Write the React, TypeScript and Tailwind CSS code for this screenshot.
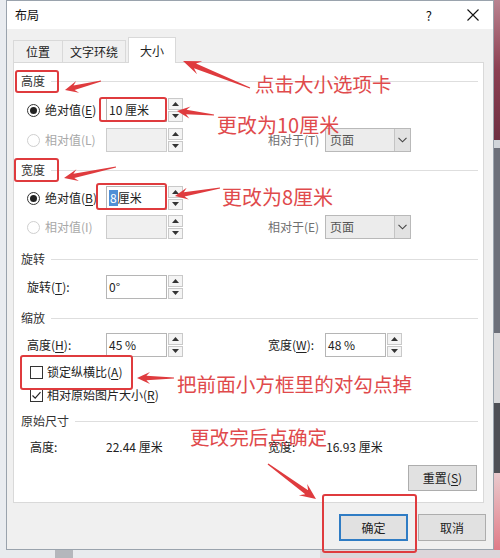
import React from "react";

const RED = "#df3b3e";

function Radio({ checked, disabled }: { checked?: boolean; disabled?: boolean }) {
  return (
    <span
      className={
        disabled
          ? "w-[13px] h-[13px] rounded-full border border-[#cfcfcf] bg-white flex items-center justify-center shrink-0"
          : "w-[13px] h-[13px] rounded-full border border-[#333] bg-white flex items-center justify-center shrink-0"
      }
    >
      {checked && <span className="w-[7px] h-[7px] rounded-full bg-[#222]" />}
    </span>
  );
}

function Check({ checked }: { checked?: boolean }) {
  return (
    <span className="w-[13px] h-[13px] border border-[#333] bg-white flex items-center justify-center shrink-0">
      {checked && (
        <svg width="11" height="11" viewBox="0 0 11 11">
          <path d="M1.5 5.5 L4.2 8.2 L9.5 2.2" fill="none" stroke="#222" strokeWidth="1.2" />
        </svg>
      )}
    </span>
  );
}

function Spinner() {
  return (
    <div className="ml-[1px] w-[15px] h-[24px] flex flex-col gap-[1px]">
      <div className="flex-1 border border-[#c9c9c9] bg-[#f4f4f4] flex items-center justify-center">
        <svg width="7" height="4" viewBox="0 0 7 4">
          <path d="M0 4 L3.5 0 L7 4 Z" fill="#333" />
        </svg>
      </div>
      <div className="flex-1 border border-[#c9c9c9] bg-[#f4f4f4] flex items-center justify-center">
        <svg width="7" height="4" viewBox="0 0 7 4">
          <path d="M0 0 L3.5 4 L7 0 Z" fill="#333" />
        </svg>
      </div>
    </div>
  );
}

function Field({ children, disabled }: { children?: React.ReactNode; disabled?: boolean }) {
  return (
    <div className="flex items-center">
      <div
        className={
          disabled
            ? "w-[61px] h-[24px] border border-[#cccccc] bg-[#f0f0f0]"
            : "w-[61px] h-[24px] border border-[#b5b5b5] bg-white flex items-center pl-[2px] text-[#222]"
        }
      >
        {children}
      </div>
      <Spinner />
    </div>
  );
}

function Select() {
  return (
    <div className="w-[86px] h-[24px] border border-[#b9b9b9] bg-[#ececec] flex items-center">
      <span className="flex-1 pl-[4px] text-[#555]">页面</span>
      <span className="w-[16px] h-full border-l border-[#c4c4c4] bg-[#e2e2e2] flex items-center justify-center">
        <svg width="9" height="6" viewBox="0 0 9 6">
          <path d="M0.5 0.8 L4.5 4.8 L8.5 0.8" fill="none" stroke="#444" strokeWidth="1.1" />
        </svg>
      </span>
    </div>
  );
}

function Header({ text, mt }: { text: string; mt: string }) {
  return (
    <div className={`flex items-center h-[18px] pl-[7px] pr-[5px] ${mt}`}>
      <span className="text-[#333]">{text}</span>
      <div className="flex-1 h-px bg-[#dedede] ml-[6px]" />
    </div>
  );
}

function Key({ k }: { k: string }) {
  return (
    <>
      (<span className="underline underline-offset-2">{k}</span>)
    </>
  );
}

type Pt = [number, number];

function arrow(t: Pt, p: Pt, head = 13, hw = 6, sw = 2.2): string {
  const dx = p[0] - t[0];
  const dy = p[1] - t[1];
  const L = Math.hypot(dx, dy);
  const ux = dx / L;
  const uy = dy / L;
  const nx = -uy;
  const ny = ux;
  const bx = p[0] - ux * head;
  const by = p[1] - uy * head;
  const kx = p[0] - ux * head * 0.72;
  const ky = p[1] - uy * head * 0.72;
  const pts: Pt[] = [
    p,
    [bx + nx * hw, by + ny * hw],
    [kx + nx * sw, ky + ny * sw],
    [t[0] + nx * 0.6, t[1] + ny * 0.6],
    [t[0] - nx * 0.6, t[1] - ny * 0.6],
    [kx - nx * sw, ky - ny * sw],
    [bx - nx * hw, by - ny * hw],
  ];
  return pts.map((q) => `${q[0].toFixed(1)},${q[1].toFixed(1)}`).join(" ");
}

const arrows: { t: Pt; p: Pt; h?: number; w?: number; s?: number }[] = [
  { t: [250, 88], p: [183, 61], h: 18, w: 7, s: 2.6 },
  { t: [101, 81], p: [65, 90] },
  { t: [214, 115], p: [177, 111] },
  { t: [116, 167], p: [64, 178], h: 14 },
  { t: [220, 188], p: [175, 196] },
  { t: [174, 378], p: [137, 378] },
  { t: [268, 464], p: [316, 499], h: 16, w: 7, s: 2.4 },
];

const boxes = [
  "left-[129px] top-[38px] w-[46px] h-[25px]",
  "left-[15px] top-[70px] w-[44px] h-[23px]",
  "left-[99px] top-[97px] w-[68px] h-[25px]",
  "left-[14px] top-[158px] w-[45px] h-[24px]",
  "left-[96px] top-[183px] w-[71px] h-[27px]",
  "left-[20px] top-[355px] w-[113px] h-[35px]",
  "left-[322px] top-[494px] w-[95px] h-[59px]",
];

export default function App() {
  return (
    <div className="relative w-[500px] h-[558px] overflow-hidden bg-[#e7eaee] font-['Noto_Sans_CJK_SC',sans-serif] text-[12px] leading-none text-[#222]">
      <div className="flex h-[550px]">
        <div className="w-[6px] bg-[#e9ecf0]" />
        {/* dialog window */}
        <div className="w-[488px] h-[550px] border border-[#9aa3ad] bg-[#f0f0f0] flex flex-col">
          <div className="h-[28px] bg-white flex items-center pl-[8px] pr-[14px]">
            <span className="text-[12px] text-[#111]">布局</span>
            <span className="ml-auto mr-[35px] text-[13px] text-[#111]">?</span>
            <svg width="12" height="12" viewBox="0 0 12 12">
              <path d="M0.5 0.5 L11.5 11.5 M11.5 0.5 L0.5 11.5" stroke="#111" strokeWidth="1.1" />
            </svg>
          </div>

          {/* tabs */}
          <div className="mt-[8px] ml-[6px] flex items-end h-[26px] relative z-10 -mb-px">
            <div className="w-[50px] h-[23px] border border-[#d9d9d9] bg-[#f0f0f0] flex items-center justify-center">
              位置
            </div>
            <div className="w-[63px] h-[23px] border border-l-0 border-[#d9d9d9] bg-[#f0f0f0] flex items-center justify-center">
              文字环绕
            </div>
            <div className="ml-[2px] w-[48px] h-[26px] border border-b-0 border-[#d9d9d9] bg-white flex items-center justify-center">
              大小
            </div>
          </div>

          {/* page */}
          <div className="ml-[6px] mr-[9px] h-[441px] border border-[#d9d9d9] bg-white flex flex-col">
            <Header text="高度" mt="mt-[9px]" />
            <div className="flex items-center h-[24px] mt-[8px] pl-[13px]">
              <div className="w-[241px] flex items-center">
                <div className="w-[79px] flex items-center gap-[5px]">
                  <Radio checked />
                  <span>
                    绝对值<Key k="E" />
                  </span>
                </div>
                <Field>10 厘米</Field>
              </div>
            </div>
            <div className="flex items-center h-[24px] mt-[6px] pl-[13px]">
              <div className="w-[241px] flex items-center">
                <div className="w-[79px] flex items-center gap-[5px] text-[#a8a8a8]">
                  <Radio disabled />
                  <span>相对值(L)</span>
                </div>
                <Field disabled />
              </div>
              <span className="w-[57px] text-[#707070]">相对于(T)</span>
              <Select />
            </div>

            <Header text="宽度" mt="mt-[9px]" />
            <div className="flex items-center h-[24px] mt-[7px] pl-[13px]">
              <div className="w-[241px] flex items-center">
                <div className="w-[79px] flex items-center gap-[5px]">
                  <Radio checked />
                  <span>
                    绝对值<Key k="B" />
                  </span>
                </div>
                <Field>
                  <span className="bg-[#4f8fd6] text-white px-[1px] py-[2px]">8</span>
                  <span>厘米</span>
                </Field>
              </div>
            </div>
            <div className="flex items-center h-[24px] mt-[5px] pl-[13px]">
              <div className="w-[241px] flex items-center">
                <div className="w-[79px] flex items-center gap-[5px] text-[#a8a8a8]">
                  <Radio disabled />
                  <span>相对值(I)</span>
                </div>
                <Field disabled />
              </div>
              <span className="w-[57px] text-[#707070]">相对于(E)</span>
              <Select />
            </div>

            <Header text="旋转" mt="mt-[11px]" />
            <div className="flex items-center h-[24px] mt-[7px] pl-[13px]">
              <span className="w-[79px]">
                旋转<Key k="T" />:
              </span>
              <Field>0°</Field>
            </div>

            <Header text="缩放" mt="mt-[10px]" />
            <div className="flex items-center h-[24px] mt-[6px] pl-[13px]">
              <div className="w-[241px] flex items-center">
                <span className="w-[79px]">
                  高度<Key k="H" />:
                </span>
                <Field>45 %</Field>
              </div>
              <span className="w-[57px]">
                宽度<Key k="W" />:
              </span>
              <Field>48 %</Field>
            </div>

            <div className="flex items-center h-[18px] mt-[6px] pl-[16px] gap-[4px]">
              <Check />
              <span>
                锁定纵横比<Key k="A" />
              </span>
            </div>
            <div className="flex items-center h-[18px] mt-[5px] pl-[16px] gap-[4px]">
              <Check checked />
              <span>
                相对原始图片大小<Key k="R" />
              </span>
            </div>

            <Header text="原始尺寸" mt="mt-[8px]" />
            <div className="flex items-center h-[18px] mt-[8px] pl-[16px]">
              <span className="w-[76px]">高度:</span>
              <span className="w-[162px]">22.44 厘米</span>
              <span className="w-[58px]">宽度:</span>
              <span>16.93 厘米</span>
            </div>

            <div className="flex justify-end mt-[9px] pr-[6px]">
              <div className="w-[69px] h-[26px] border border-[#adadad] bg-[#e1e1e1] flex items-center justify-center">
                重置<Key k="S" />
              </div>
            </div>
          </div>

          {/* dialog buttons */}
          <div className="flex justify-end gap-[10px] mt-[11px] pr-[7px]">
            <div className="w-[69px] h-[27px] border-2 border-[#2f7cc4] bg-[#e1e1e1] flex items-center justify-center">
              确定
            </div>
            <div className="w-[68px] h-[27px] border border-[#adadad] bg-[#e1e1e1] flex items-center justify-center">
              取消
            </div>
          </div>
        </div>
        {/* desktop behind the window */}
        <div className="w-[6px] flex flex-col">
          <div className="h-[140px] bg-gradient-to-b from-[#b98391] via-[#8c3f52] to-[#6f2f42]" />
          <div className="h-[8px] bg-[#d0d4d9]" />
          <div className="h-[185px] bg-[#6c6f79]" />
          <div className="h-[70px] bg-[#d9d9db]" />
          <div className="h-[70px] bg-[#4e4f55]" />
          <div className="flex-1 bg-gradient-to-b from-[#e9c9cd] to-[#e07a88]" />
        </div>
      </div>
      <div className="h-[8px] flex bg-[#e8ebee]">
        <div className="ml-[55px] w-[18px] bg-[#b4b7bc]" />
        <div className="ml-auto w-[180px] bg-[#dcd6da]" />
      </div>

      {/* annotation overlay */}
      {boxes.map((b) => (
        <div key={b} className={`absolute ${b} border-[2.5px] border-[#df3b3e] rounded-[3px] pointer-events-none`} />
      ))}
      <svg className="absolute left-0 top-0 pointer-events-none" width="500" height="558" viewBox="0 0 500 558">
        {arrows.map((a, i) => (
          <polygon key={i} points={arrow(a.t, a.p, a.h, a.w, a.s)} fill={RED} />
        ))}
      </svg>
      <div className="absolute left-[255px] top-[74px] text-[19.5px] text-[#e04a4c] leading-[20px] whitespace-nowrap">
        点击大小选项卡
      </div>
      <div className="absolute left-[217px] top-[115px] text-[20px] text-[#e04a4c] leading-[20px] whitespace-nowrap">
        更改为10厘米
      </div>
      <div className="absolute left-[222px] top-[187px] text-[20px] text-[#e04a4c] leading-[20px] whitespace-nowrap">
        更改为8厘米
      </div>
      <div className="absolute left-[177px] top-[374px] text-[19.6px] text-[#e04a4c] leading-[20px] whitespace-nowrap">
        把前面小方框里的对勾点掉
      </div>
      <div className="absolute left-[190px] top-[427px] text-[19.6px] text-[#e04a4c] leading-[20px] whitespace-nowrap">
        更改完后点确定
      </div>
    </div>
  );
}
